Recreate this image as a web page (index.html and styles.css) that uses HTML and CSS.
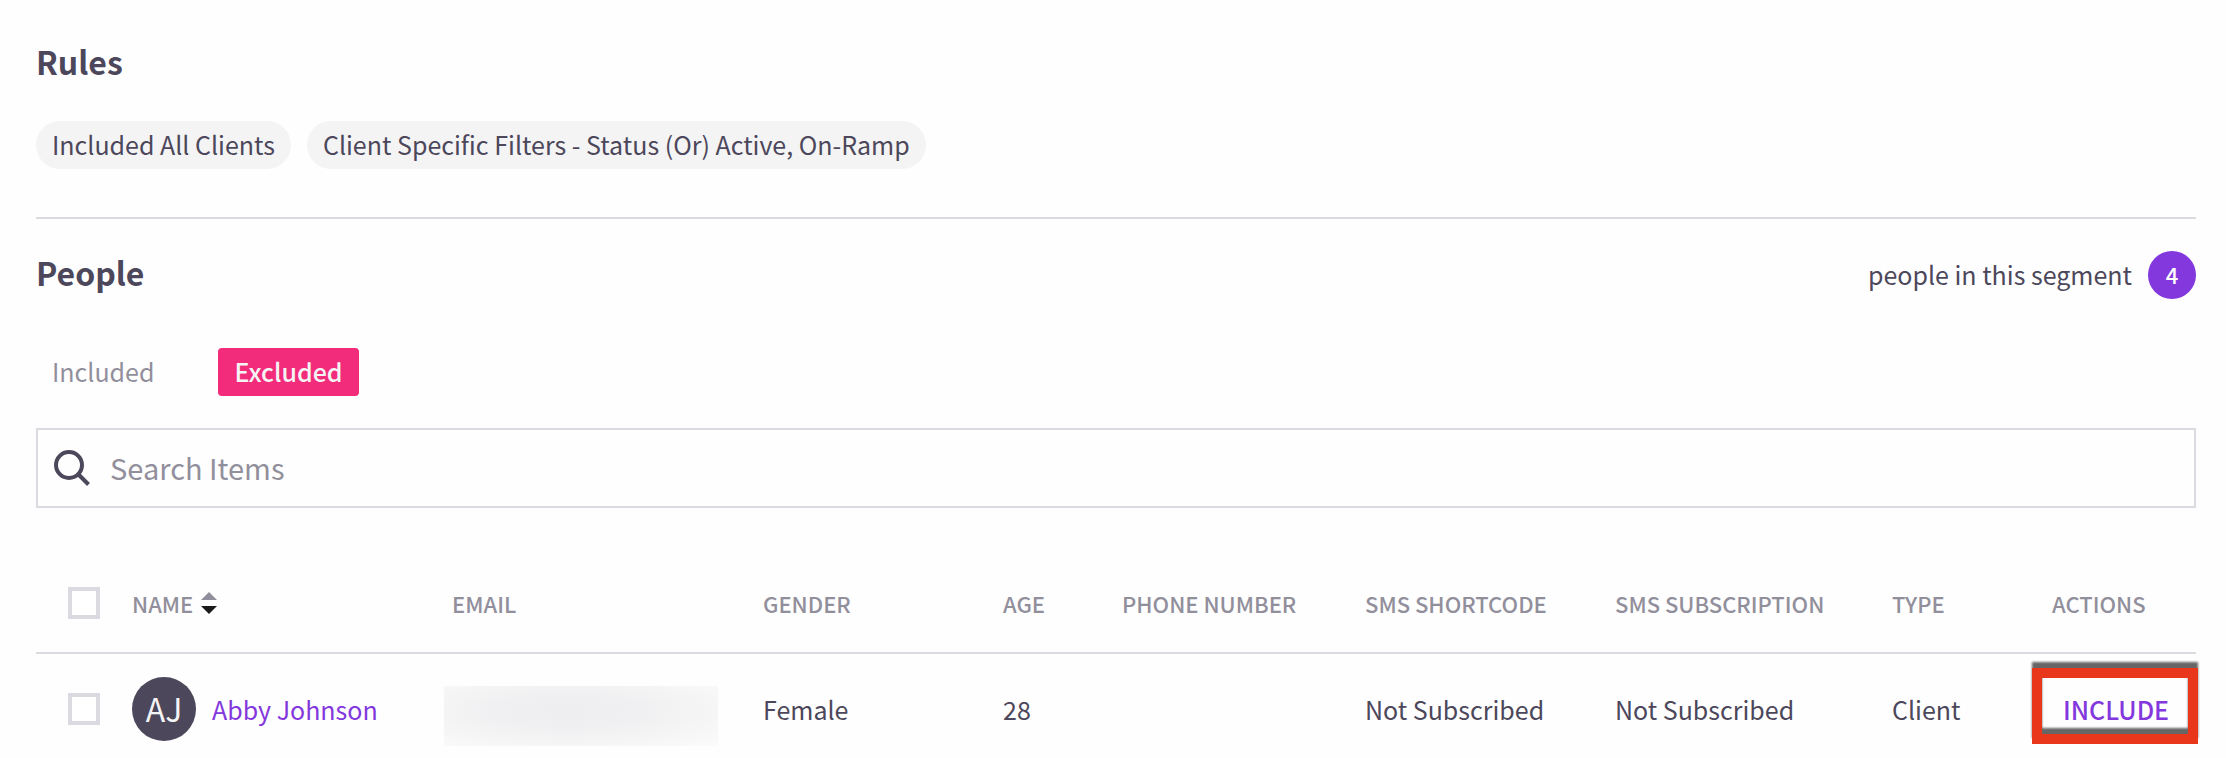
FILE: index.html
```html
<!DOCTYPE html>
<html lang="en">
<head>
    <meta charset="UTF-8">
    <meta name="viewport" content="width=device-width, initial-scale=1.0">
    <title>Segment</title>
    <link rel="stylesheet" href="styles.css">
</head>
<body>
    <section class="rules">
        <h2>Rules</h2>
        <div class="tags">
            <span class="tag">Included All Clients</span>
            <span class="tag">Client Specific Filters - Status (Or) Active, On-Ramp</span>
        </div>
    </section>

    <section class="people">
        <div class="people-header">
            <h2>People</h2>
            <div class="people-count">people in this segment <span class="badge">4</span></div>
        </div>
        <div class="tabs">
            <button type="button" class="tab">Included</button>
            <button type="button" class="tab active">Excluded</button>
        </div>
        <label class="search">
            <svg class="search-icon" width="36" height="36" viewBox="0 0 36 36" aria-hidden="true">
                <circle cx="15" cy="15" r="13" fill="none" stroke="#4c475b" stroke-width="4"/>
                <path d="M24.500 24.500L34.500 34.500" stroke="#4c475b" stroke-width="4"/>
            </svg>
            <input type="text" placeholder="Search Items" aria-label="Search Items">
        </label>

        <table>
            <colgroup>
                <col class="col-check">
                <col class="col-name">
                <col class="col-email">
                <col class="col-gender">
                <col class="col-age">
                <col class="col-phone">
                <col class="col-shortcode">
                <col class="col-subscription">
                <col class="col-type">
                <col class="col-actions">
            </colgroup>
            <thead>
                <tr>
                    <th class="check"><input type="checkbox" aria-label="Select all"></th>
                    <th>
                        <span class="sortable">NAME
                            <svg width="16" height="22" viewBox="0 0 16 22" aria-hidden="true">
                                <path d="M0 8L8 0L16 8Z" fill="#928f9c"/>
                                <path d="M0 14L8 22L16 14Z" fill="#1a1a1a"/>
                            </svg>
                        </span>
                    </th>
                    <th>EMAIL</th>
                    <th>GENDER</th>
                    <th>AGE</th>
                    <th>PHONE NUMBER</th>
                    <th>SMS SHORTCODE</th>
                    <th>SMS SUBSCRIPTION</th>
                    <th>TYPE</th>
                    <th>ACTIONS</th>
                </tr>
            </thead>
            <tbody>
                <tr>
                    <td class="check"><input type="checkbox" aria-label="Select Abby Johnson"></td>
                    <td>
                        <div class="person">
                            <span class="avatar">AJ</span>
                            <a href="#">Abby Johnson</a>
                        </div>
                    </td>
                    <td><div class="redacted"></div></td>
                    <td>Female</td>
                    <td>28</td>
                    <td></td>
                    <td>Not Subscribed</td>
                    <td>Not Subscribed</td>
                    <td>Client</td>
                    <td class="actions"><button type="button" class="include">INCLUDE</button></td>
                </tr>
            </tbody>
        </table>
    </section>
</body>
</html>
```
FILE: styles.css
```css
* {
    box-sizing: border-box;
}
body {
    margin: 0;
    padding: 40px 30px 0 36px;
    background: #fefefe;
    color: #4c475b;
    font-family: "Noto Sans CJK SC", "Noto Sans", sans-serif;
    font-size: 25px;
    line-height: 46px;
}
h2 {
    margin: 0;
    font-size: 32px;
    font-weight: 700;
    line-height: 42px;
}
button,
input {
    font-family: inherit;
}
button {
    padding: 0;
    border: none;
    background: none;
    cursor: pointer;
}

/* rules */
.rules {
    padding-bottom: 48px;
    border-bottom: 2px solid #dbdae0;
}
.tags {
    display: flex;
    gap: 16px;
    margin-top: 39px;
}
.tag {
    padding: 0 16px 2px;
    border-radius: 24px;
    background: #f4f4f4;
}

/* people */
.people-header {
    display: flex;
    justify-content: space-between;
    margin-top: 32px;
}
.people-count {
    display: flex;
    gap: 16px;
}
.badge {
    width: 48px;
    height: 48px;
    border-radius: 50%;
    background: #8338dd;
    color: #fff;
    font-size: 22px;
    font-weight: 500;
    text-align: center;
}
.tabs {
    display: flex;
    gap: 48px;
    margin-top: 49px;
}
.tab {
    padding: 0 16px 2px;
    border-radius: 4px;
    color: #928f9c;
    font-size: 25px;
    line-height: 46px;
}
.tab.active {
    background: #f22b7b;
    color: #f4f4f4;
    font-weight: 500;
}
.search {
    display: flex;
    align-items: center;
    gap: 20px;
    height: 80px;
    margin-top: 32px;
    padding: 0 16px;
    border: 2px solid #dbdae0;
}
.search-icon {
    flex: none;
}
.search input {
    flex: 1;
    padding: 0 0 2px;
    border: none;
    outline: none;
    background: none;
    color: #4c475b;
    font-size: 29px;
    line-height: 46px;
}
.search input::placeholder {
    color: #928f9c;
    opacity: 1;
}

/* table */
table {
    width: 100%;
    margin-top: 48px;
    border-collapse: separate;
    border-spacing: 0;
    table-layout: fixed;
}
.col-check { width: 96px; }
.col-name { width: 320px; }
.col-email { width: 311px; }
.col-gender { width: 240px; }
.col-age { width: 119px; }
.col-phone { width: 243px; }
.col-shortcode { width: 250px; }
.col-subscription { width: 277px; }
.col-type { width: 160px; }
.col-actions { width: 144px; }
th {
    padding: 24px 0 26px;
    border-bottom: 2px solid #dbdae0;
    color: #928f9c;
    font-size: 22px;
    font-weight: 500;
    text-align: left;
    white-space: nowrap;
}
td {
    padding: 22px 0 17px;
    white-space: nowrap;
}
.check {
    padding-left: 32px;
}
.check input {
    display: block;
    width: 32px;
    height: 32px;
    margin: 0;
    border: 4px solid #dbdae0;
    background: #fff;
    appearance: none;
}
.check input:checked {
    background: #8338dd;
}
.sortable {
    display: flex;
    align-items: center;
    gap: 8px;
}
.person {
    display: flex;
    align-items: center;
    gap: 16px;
}
.person a {
    color: #8338dd;
    text-decoration: none;
}
.avatar {
    width: 64px;
    height: 64px;
    margin-top: 1px;
    border-radius: 50%;
    background: #4c475b;
    color: #f4f4f4;
    font-size: 32px;
    font-weight: 400;
    line-height: 62px;
    text-align: center;
}
/* hidden email */
.redacted {
    width: 274px;
    height: 60px;
    margin: 9px 0 -5px -8px;
    background: radial-gradient(ellipse at 45% 42%, #eeeef0 0%, #f0f0f2 35%, #f5f5f5 65%, #fbfbfb 100%);
}
.actions {
    padding-left: 11px;
}
.include {
    position: relative;
    color: #8338dd;
    font-size: 25px;
    font-weight: 500;
    line-height: 46px;
}
/* red frame over the button */
.include::after {
    content: "";
    position: absolute;
    top: -18px;
    right: -29px;
    bottom: -12px;
    left: -31px;
    border: 10px solid #e8371b;
    filter: drop-shadow(0 -6px 1px rgba(0, 0, 0, 0.6));
}
```
